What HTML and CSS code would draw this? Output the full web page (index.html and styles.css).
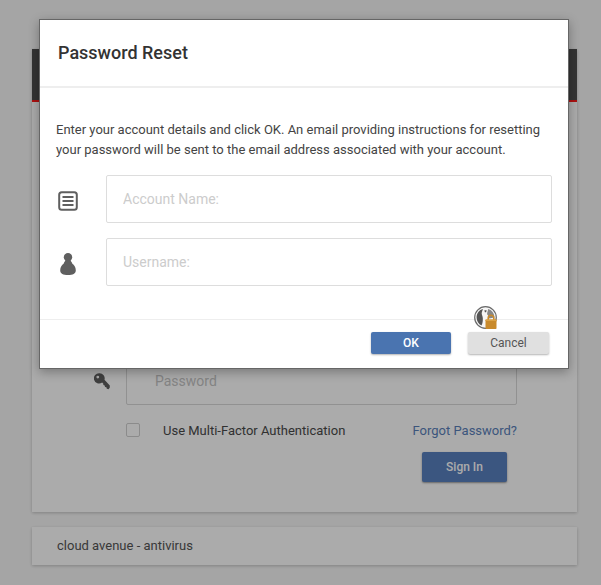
FILE: index.html
```html
<!DOCTYPE html>
<html lang="en">
<head>
<meta charset="utf-8">
<title>Password Reset</title>
<link rel="stylesheet" href="styles.css">
</head>
<body>
<main class="page">
  <section class="login-card">
    <header class="login-head"></header>
    <div class="login-body">
      <div class="field-row">
        <svg class="key-icon" viewBox="0 0 16 17" width="16" height="17" aria-hidden="true">
          <path fill="#5f5f5f" fill-rule="evenodd" d="M5.600.2a5.200 5.200 0 0 1 4.900 6.600l5.300 5.600v2.200l-1.200 1.600-1.800-.4-.4-1.500-1.400-.3-.3-1.500-1.300-.4-.2-1.500-1.100-1a5.200 5.200 0 1 1-2.500-9.400ZM3.800 2.700a1.400 1.400 0 1 0 0 2.800 1.400 1.400 0 0 0 0-2.800Z"/>
        </svg>
        <input class="login-input" type="password" placeholder="Password">
      </div>
      <div class="options-row">
        <input class="check" type="checkbox">
        <span class="mfa">Use Multi-Factor Authentication</span>
        <a class="forgot" href="#">Forgot Password?</a>
      </div>
      <div class="signin-row"><button class="signin" type="button">Sign In</button></div>
    </div>
  </section>
  <section class="foot-card">cloud avenue - antivirus</section>
</main>

<div class="overlay"></div>

<div class="modal" role="dialog">
  <header class="modal-head"><h1 class="modal-title">Password Reset</h1></header>
  <div class="modal-body">
    <p class="intro">Enter your account details and click OK. An email providing instructions for resetting your password will be sent to the email address associated with your account.</p>
    <div class="modal-row">
      <svg class="row-icon" viewBox="0 0 20 20" width="20" height="20" aria-hidden="true">
        <rect x="1.200" y="1.200" width="17.600" height="17.600" rx="2.500" fill="none" stroke="#5f5f5f" stroke-width="2"/>
        <path d="M4.500 6h11M4.500 10h11M4.500 14h11" stroke="#5f5f5f" stroke-width="2"/>
      </svg>
      <input class="modal-input" type="text" placeholder="Account Name:">
    </div>
    <div class="modal-row">
      <svg class="row-icon" viewBox="0 0 20 22" width="20" height="22" aria-hidden="true">
        <circle cx="10" cy="4.200" r="4.200" fill="#5f5f5f"/>
        <path fill="#5f5f5f" d="M10 7c2.600 0 3.600 1.600 4.400 3.800 1.600 1.200 3.400 3.400 3.400 6.500 0 3.500-3 4.700-7.800 4.700s-7.800-1.200-7.800-4.700c0-3.100 1.800-5.300 3.400-6.500C6.400 8.600 7.400 7 10 7Z"/>
      </svg>
      <input class="modal-input" type="text" placeholder="Username:">
    </div>
  </div>
  <footer class="modal-foot">
    <button class="btn btn-ok" type="button">OK</button>
    <button class="btn btn-cancel" type="button">Cancel</button>
  </footer>
  <svg class="lock-badge" viewBox="0 0 24 25" width="24" height="25" aria-hidden="true">
    <circle cx="11.500" cy="11.500" r="10.800" fill="#f6f6f6" stroke="#6a6a6a" stroke-width="1.200"/>
    <path fill="#555" d="M9 3C5.200 3.800 2.600 7.300 2.600 11.500c0 3.600 2 6.700 4.900 8.100 1-2 1.500-4.600 1.300-7.700-.2-2.300-1.500-3.300-1-5.300C8 5.400 8.700 4 9 3Z"/>
    <path fill="#888" d="M14 3c3.800.8 6.400 4.300 6.400 8.500l-5.400 1c-.2-2-.8-3-1.800-4.100-.5-1.400 1.100-3.700.8-5.400Z"/>
    <path fill="#555" d="M10.400 4.200h2.200l-.5 2h-1.200Z"/>
    <path fill="none" stroke="#c98a2b" stroke-width="1.600" d="M14.200 14v-2a2.800 2.800 0 0 1 5.600 0v2"/>
    <rect x="11.500" y="13.500" width="11" height="9.500" rx=".8" fill="#c98a2b"/>
    <rect x="11.500" y="13.500" width="11" height="1.500" fill="#dba245"/>
  </svg>
</div>
</body>
</html>
```
FILE: styles.css
```css
* { box-sizing: border-box; }
html, body { margin: 0; height: 100%; }
body {
  position: relative;
  height: 585px;
  overflow: hidden;
  background: #f7f7f7;
  font-family: Roboto, "Liberation Sans", sans-serif;
  font-size: 14px;
  color: #333;
}
.page {
  display: flex;
  flex-direction: column;
  gap: 15px;
  padding: 49px 24px 0 32px;
}
.login-card, .foot-card {
  background: #fff;
  box-shadow: 0 1px 3px rgba(0, 0, 0, .22);
}
.login-head {
  height: 53px;
  background: #4c4c4c;
  border-bottom: 2px solid #ff1a1a;
}
.login-body {
  padding: 255px 60px 30px 62px;
}
.field-row {
  display: flex;
  align-items: center;
  gap: 16px;
}
.key-icon { flex: none; }
.login-input {
  flex: 1;
  min-width: 0;
  height: 48px;
  padding: 0 28px;
  border: 1px solid #d8d8d8;
  border-radius: 2px;
  font: 14px Roboto, sans-serif;
  background: #fff;
}
.login-input::placeholder { color: #c4c4c4; opacity: 1; }
.options-row {
  display: flex;
  align-items: center;
  margin: 18px 0 0 32px;
  height: 14px;
}
.check {
  appearance: none;
  width: 14px;
  height: 14px;
  margin: 0 23px 0 0;
  border: 1px solid #cfcfcf;
  border-radius: 2px;
  background: #fff;
}
.mfa { font-size: 13px; color: #4a4a4a; }
.forgot { margin-left: auto; font-size: 13px; color: #5a7fba; text-decoration: none; }
.signin-row {
  display: flex;
  justify-content: flex-end;
  margin: 15px 10px 0 0;
}
.signin {
  width: 85px;
  height: 30px;
  border: 0;
  border-radius: 2px;
  background: #5880bf;
  color: #fff;
  font: 500 12px Roboto, sans-serif;
  box-shadow: 0 1px 2px rgba(0, 0, 0, .4);
}
.foot-card {
  height: 38px;
  display: flex;
  align-items: center;
  padding: 0 0 2px 25px;
  font-size: 13px;
  color: #555;
}
.overlay {
  position: absolute;
  inset: 0;
  background: rgba(0, 0, 0, .33);
}
.modal {
  position: absolute;
  left: 39px;
  top: 19px;
  width: 530px;
  height: 350px;
  background: #fff;
  border: 1px solid #666;
  box-shadow: 0 3px 10px rgba(0, 0, 0, .3);
}
.modal-head {
  height: 68px;
  padding: 0 18px 2px;
  display: flex;
  align-items: center;
  border-bottom: 2px solid #eee;
}
.modal-title {
  margin: 0;
  font-size: 18px;
  font-weight: 500;
  color: #333;
}
.modal-body {
  height: 231px;
  padding: 32px 16px 0;
  display: flex;
  flex-direction: column;
  gap: 15px;
}
.intro {
  margin: 0;
  line-height: 20px;
  font-size: 13px;
  color: #444;
}
.modal-row {
  display: flex;
  align-items: center;
}
.row-icon { flex: none; margin: 4px 28px 0 2px; }
.modal-input {
  flex: 1;
  min-width: 0;
  height: 48px;
  padding: 0 16px;
  border: 1px solid #ddd;
  border-radius: 2px;
  font: 14px Roboto, sans-serif;
}
.modal-input::placeholder { color: #ccc; opacity: 1; }
.modal-foot {
  height: 49px;
  padding: 12px 19px 0 0;
  border-top: 1px solid #eee;
  display: flex;
  justify-content: flex-end;
  align-items: flex-start;
  gap: 17px;
}
.btn {
  height: 22px;
  width: 81px;
  border: 0;
  border-radius: 2px;
  font: 12px Roboto, sans-serif;
  box-shadow: 0 1px 2px rgba(0, 0, 0, .3);
}
.btn-ok { width: 80px; background: #4a74b0; color: #fff; font-weight: 500; }
.btn-cancel { background: #e0e0e0; color: #555; }
.lock-badge {
  position: absolute;
  left: 434px;
  top: 286px;
}
```
